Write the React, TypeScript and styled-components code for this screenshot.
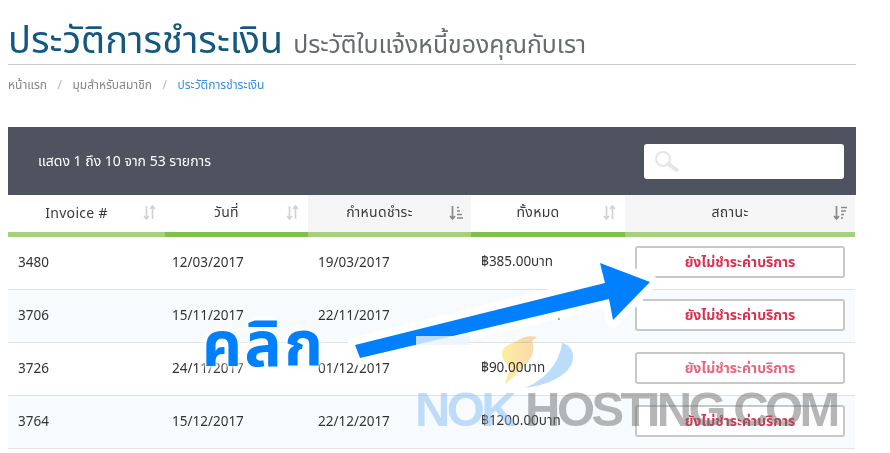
import styled, { createGlobalStyle } from 'styled-components';

const GlobalStyle = createGlobalStyle`
  html, body {
    margin: 0;
    padding: 0;
    background: #fff;
  }
  body {
    font-family: 'Noto Sans', 'Noto Sans Thai', 'DejaVu Sans', sans-serif;
  }
`;

const Page = styled.div`
  position: relative;
  width: 890px;
  height: 453px;
  overflow: hidden;
  padding: 0 34px 0 8px;
  box-sizing: border-box;
`;

const Heading = styled.div`
  display: flex;
  align-items: baseline;
  gap: 10px;
  height: 65px;
  padding-top: 13px;
  box-sizing: border-box;
  border-bottom: 1px solid #c8cbcc;
`;

const Title = styled.h1`
  margin: 0;
  font-size: 38px;
  line-height: 50px;
  font-weight: 400;
  color: #14587f;
`;

const Subtitle = styled.span`
  font-size: 24.8px;
  color: #666b6e;
`;

const Crumbs = styled.div`
  display: flex;
  align-items: center;
  height: 39px;
  font-size: 12px;
  color: #858585;
`;

const Slash = styled.span`
  margin: 0 10.5px;
  color: #b5b5b5;
`;

const CurrentCrumb = styled.span`
  color: #3a8fdc;
`;

const Toolbar = styled.div`
  display: flex;
  align-items: center;
  justify-content: space-between;
  height: 68px;
  margin-top: 23px;
  padding: 0 12px 0 30px;
  box-sizing: border-box;
  background: #4f535f;
  color: #fff;
  font-size: 14px;
`;

const SearchBox = styled.div`
  display: flex;
  align-items: center;
  width: 200px;
  height: 35px;
  padding-left: 10px;
  box-sizing: border-box;
  background: #fff;
  border-radius: 3px;
`;

const Table = styled.table`
  width: 847px;
  border-collapse: separate;
  border-spacing: 0;
  table-layout: fixed;
`;

const HeadCell = styled.th<{ $sorted?: boolean; $active?: boolean }>`
  position: relative;
  height: 42px;
  padding: 0 20px 3px 0;
  box-sizing: border-box;
  font-size: 14px;
  font-weight: 400;
  letter-spacing: 0.3px;
  color: #3a3a3a;
  background: ${(p) => (p.$sorted ? '#f5f5f5' : '#fff')};
  border-bottom: 5px solid ${(p) => (p.$active ? '#7fbf4d' : '#a5d17f')};
`;

const SortMark = styled.svg`
  position: absolute;
  right: 7px;
  top: 10px;
`;

const Row = styled.tr<{ $tinted?: boolean }>`
  background: ${(p) => (p.$tinted ? '#f8fbfd' : '#fff')};
`;

const Cell = styled.td<{ $tight?: boolean }>`
  height: 53px;
  padding: 0 10px 2px ${(p) => (p.$tight ? '7px' : '10px')};
  box-sizing: border-box;
  font-size: 13.5px;
  color: #333;
  border-bottom: 1px solid #dfe3e6;
`;

const StatusButton = styled.div<{ $faded?: boolean }>`
  display: flex;
  align-items: center;
  justify-content: center;
  height: 32px;
  box-sizing: border-box;
  border: 2px solid #c8c8c8;
  border-radius: 3px;
  background: #fff;
  font-size: 14px;
  font-weight: 700;
  color: ${(p) => (p.$faded ? '#e8677f' : '#d9334f')};
`;

const ClickLabel = styled.div`
  position: absolute;
  left: 202px;
  top: 302px;
  font-size: 62px;
  line-height: 80px;
  font-weight: 700;
  letter-spacing: 2.5px;
  color: #007fff;
  text-shadow: 0 0 6px #fff, 0 0 6px #fff, 0 0 10px #fff;
`;

const Overlay = styled.svg`
  position: absolute;
  left: 0;
  top: 0;
`;

const LogoShape = styled.path`
  mix-blend-mode: multiply;
`;

const Watermark = styled.div`
  position: absolute;
  left: 415px;
  top: 381px;
  display: flex;
  gap: 12px;
  font-family: 'Liberation Sans', sans-serif;
  font-size: 49px;
  line-height: 56px;
  font-weight: 700;
  letter-spacing: -3.6px;
`;

const WatermarkBlue = styled.span`
  color: rgba(130, 190, 245, 0.5);
`;

const WatermarkGray = styled.span`
  color: rgba(110, 110, 110, 0.5);
`;

const columns = [
  { label: 'Invoice #', width: 157 },
  { label: 'วันที่', width: 143, active: true },
  { label: 'กำหนดชำระ', width: 163, sorted: true, mark: 'asc' },
  { label: 'ทั้งหมด', width: 154, active: true },
  { label: 'สถานะ', width: 230, sorted: true, mark: 'desc' },
];

const rows = [
  { id: '3480', date: '12/03/2017', due: '19/03/2017', total: '฿385.00บาท' },
  { id: '3706', date: '15/11/2017', due: '22/11/2017', total: '' },
  { id: '3726', date: '24/11/2017', due: '01/12/2017', total: '฿90.00บาท', faded: true },
  { id: '3764', date: '15/12/2017', due: '22/12/2017', total: '฿1200.00บาท' },
];

function SortIcon({ mark }: { mark?: string }) {
  const tone = mark ? '#8a8a8a' : '#d2d2d2';
  return (
    <SortMark width="15" height="16" viewBox="0 0 15 16" fill="none" stroke={tone} strokeWidth="1.7">
      <path d="M3.5 1v13M1 11l2.5 3L6 11" />
      {!mark && <path d="M9.5 14V1M7 4l2.5-3L12 4" />}
      {mark === 'asc' && <path d="M8 2.5h2M8 6h3M8 9.5h5M8 13h6" />}
      {mark === 'desc' && <path d="M8 2.5h6M8 6h5M8 9.5h3M8 13h2" />}
    </SortMark>
  );
}

export default function App() {
  return (
    <Page>
      <GlobalStyle />
      <Heading>
        <Title>ประวัติการชำระเงิน</Title>
        <Subtitle>ประวัติใบแจ้งหนี้ของคุณกับเรา</Subtitle>
      </Heading>
      <Crumbs>
        <span>หน้าแรก</span>
        <Slash>/</Slash>
        <span>มุมสำหรับสมาชิก</span>
        <Slash>/</Slash>
        <CurrentCrumb>ประวัติการชำระเงิน</CurrentCrumb>
      </Crumbs>
      <Toolbar>
        <span>แสดง 1 ถึง 10 จาก 53 รายการ</span>
        <SearchBox>
          <svg width="26" height="22" viewBox="0 0 26 22" fill="none">
            <circle cx="9" cy="9" r="7" stroke="#e4e6e6" strokeWidth="2" />
            <path d="M14.5 14l8 6" stroke="#e4e6e6" strokeWidth="4" strokeLinecap="round" />
          </svg>
        </SearchBox>
      </Toolbar>
      <Table>
        <colgroup>
          {columns.map((c) => (
            <col key={c.label} style={{ width: c.width }} />
          ))}
        </colgroup>
        <thead>
          <tr>
            {columns.map((c) => (
              <HeadCell key={c.label} $sorted={c.sorted} $active={c.active}>
                {c.label}
                <SortIcon mark={c.mark} />
              </HeadCell>
            ))}
          </tr>
        </thead>
        <tbody>
          {rows.map((r, i) => (
            <Row key={r.id} $tinted={i % 2 === 1}>
              <Cell>{r.id}</Cell>
              <Cell $tight>{r.date}</Cell>
              <Cell>{r.due}</Cell>
              <Cell>{r.total}</Cell>
              <Cell>
                <StatusButton $faded={r.faded}>ยังไม่ชำระค่าบริการ</StatusButton>
              </Cell>
            </Row>
          ))}
        </tbody>
      </Table>
      <Overlay width="890" height="453" viewBox="0 0 890 453">
        <defs>
          <linearGradient id="birdBody" x1="0" x2="1" y1="0" y2="0">
            <stop offset="0" stopColor="#fdefa0" />
            <stop offset="1" stopColor="#fbd7ae" />
          </linearGradient>
        </defs>
        <path d="M355 345L605 283L600 263L650 282L613 320L609 299L360 358Z" fill="#fff" stroke="#fff" strokeWidth="15" strokeLinejoin="round" />
        <path d="M355 345L605 283L600 263L650 282L613 320L609 299L360 358Z" fill="#007fff" />
        <circle cx="559" cy="319" r="0.8" fill="#444" />
        <rect x="416" y="336" width="54" height="9" fill="#eaf3fd" opacity="0.8" />
        <LogoShape d="M522 338c5-2 10-2 15-1l-5 4c3 8 1 16-5 22-7 7-14 14-22 22 1-6 3-11 6-16-4-5-10-10-9-17 2-8 11-8 20-14z" fill="url(#birdBody)" />
        <LogoShape d="M562 343c10 2 13 12 10 20-5 13-24 22-47 25 17-7 34-22 37-45z" fill="#bcdcfb" />
      </Overlay>
      <ClickLabel>คลิก</ClickLabel>
      <Watermark>
        <WatermarkBlue>NOK</WatermarkBlue>
        <WatermarkGray>HOSTING.COM</WatermarkGray>
      </Watermark>
    </Page>
  );
}
